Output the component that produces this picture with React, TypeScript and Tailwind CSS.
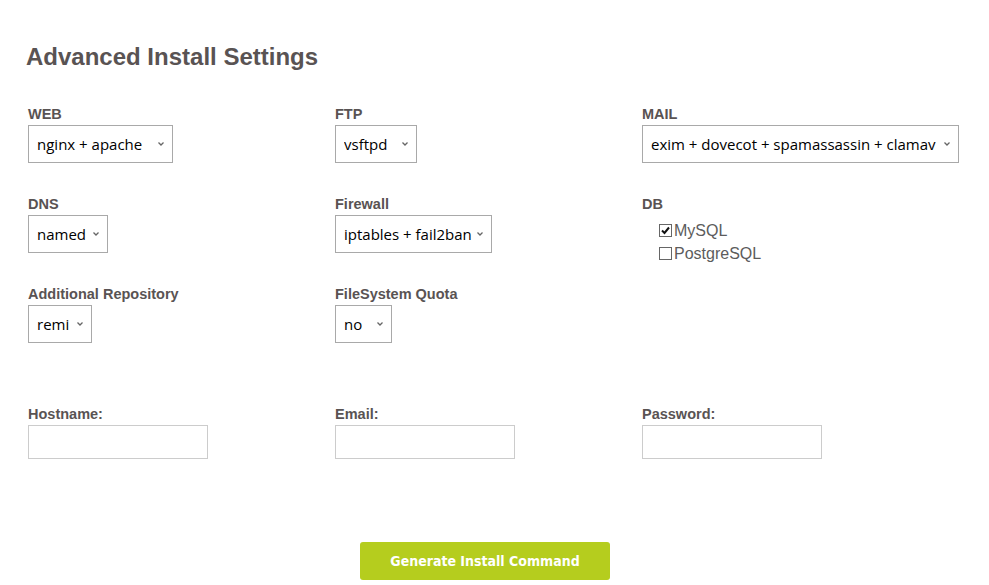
import { useState } from 'react'

const sel = 'appearance-none h-[38px] border border-[#a9a9a9] bg-white pl-[8px] text-[15px] text-black outline-none'
const lbl = 'text-[14.5px] font-bold leading-[17px] text-[#595353] pt-[2px] mb-[2px]'

function Chevron() {
  return (
    <svg className="pointer-events-none absolute right-[8px] top-[16px]" width="8" height="6" viewBox="0 0 8 6">
      <path d="M1.5 1.5 L4 4 L6.5 1.5" stroke="#666" strokeWidth="1.3" fill="none" />
    </svg>
  )
}

function Select({ label, value, options, width }: { label: string; value: string; options: string[]; width: string }) {
  return (
    <div className="flex flex-col">
      <label className={lbl}>{label}</label>
      <div className={`relative ${width}`}>
        <select defaultValue={value} className={`${sel} w-full`} style={{ fontFamily: '"Open Sans", sans-serif' }}>
          {options.map(o => (
            <option key={o}>{o}</option>
          ))}
        </select>
        <Chevron />
      </div>
    </div>
  )
}

function Field({ label, type = 'text' }: { label: string; type?: string }) {
  return (
    <div className="flex flex-col">
      <label className={lbl}>{label}</label>
      <input type={type} className="w-[180px] h-[34px] border border-[#cccccc] bg-white outline-none" />
    </div>
  )
}

function Check({ label, checked, onToggle }: { label: string; checked: boolean; onToggle: () => void }) {
  return (
    <label className="flex items-center cursor-pointer" onClick={onToggle}>
      <span className="relative w-[13px] h-[13px] border border-[#666] bg-white mr-[2px] shrink-0">
        {checked && (
          <svg className="absolute left-[1px] top-[1px]" width="9" height="9" viewBox="0 0 9 9">
            <path d="M1 4.5 L3.5 7 L8 1.5" stroke="#111" strokeWidth="2" fill="none" />
          </svg>
        )}
      </span>
      {label}
    </label>
  )
}

export default function App() {
  const [mysql, setMysql] = useState(true)
  const [pg, setPg] = useState(false)

  return (
    <div className="w-[989px] h-[585px] bg-white pl-[28px] pt-[42px]" style={{ fontFamily: '"Liberation Sans", Arial, sans-serif' }}>
      <h2 className="text-[24px] font-bold leading-[29px] text-[#595353] -ml-[2px]">Advanced Install Settings</h2>

      <div className="grid grid-cols-[307px_307px_307px] gap-y-[31px] mt-[33px]">
        <Select label="WEB" value="nginx + apache" options={['nginx + apache', 'nginx + php-fpm', 'apache']} width="w-[145px]" />
        <Select label="FTP" value="vsftpd" options={['vsftpd', 'proftpd']} width="w-[82px]" />
        <Select
          label="MAIL"
          value="exim + dovecot + spamassassin + clamav"
          options={['exim + dovecot + spamassassin + clamav', 'exim + dovecot', 'exim']}
          width="w-[317px]"
        />

        <Select label="DNS" value="named" options={['named', 'no']} width="w-[80px]" />
        <Select label="Firewall" value="iptables + fail2ban" options={['iptables + fail2ban', 'iptables', 'no']} width="w-[157px]" />
        <div className="flex flex-col">
          <label className={lbl}>DB</label>
          <div className="h-[38px] pl-[17px] pt-[4px] flex flex-col text-[16px] leading-[23px] text-[#5c5c5c]">
            <Check label="MySQL" checked={mysql} onToggle={() => setMysql(!mysql)} />
            <Check label="PostgreSQL" checked={pg} onToggle={() => setPg(!pg)} />
          </div>
        </div>

        <Select label="Additional Repository" value="remi" options={['remi', 'no']} width="w-[64px]" />
        <Select label="FileSystem Quota" value="no" options={['no', 'yes']} width="w-[57px]" />
        <div />
      </div>

      <div className="grid grid-cols-[307px_307px_307px] mt-[61px]">
        <Field label="Hostname:" />
        <Field label="Email:" />
        <Field label="Password:" type="password" />
      </div>

      <div className="flex mt-[83px] pl-[332px]">
        <button
          className="w-[250px] h-[38px] rounded-[3px] bg-[#b5cd1e] text-white text-[14px] font-bold"
          style={{ fontFamily: '"DejaVu Sans Condensed", "DejaVu Sans", Verdana, sans-serif' }}
        >
          Generate Install Command
        </button>
      </div>
    </div>
  )
}
